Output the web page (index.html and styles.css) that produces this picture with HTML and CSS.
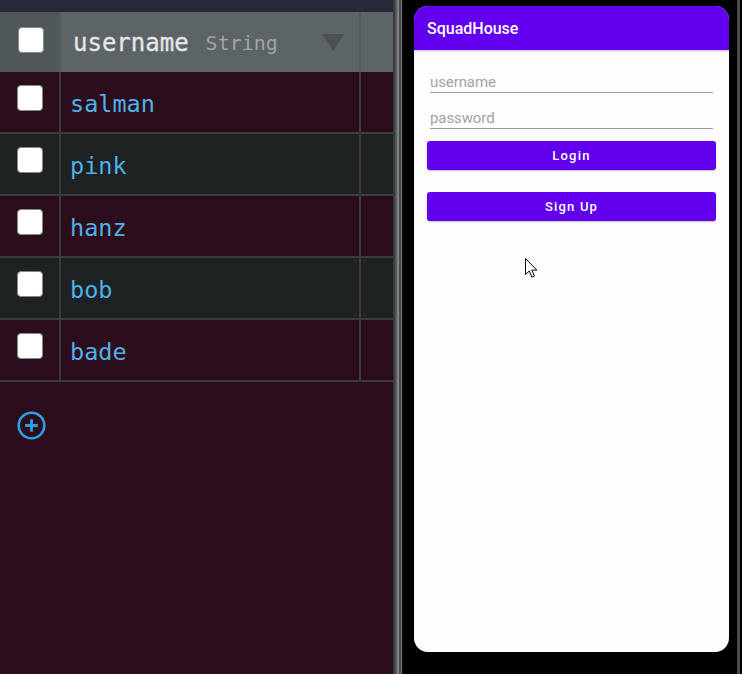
FILE: index.html
```html
<!DOCTYPE html>
<html lang="en">
<head>
<meta charset="utf-8">
<title>SquadHouse</title>
<link rel="stylesheet" href="styles.css">
</head>
<body>
<div class="screen">
  <section class="grid-panel">
    <div class="topbar"></div>
    <div class="row head">
      <div class="cell check"><span class="box"></span></div>
      <div class="cell name">
        <span class="col-title">username</span>
        <span class="col-type">String</span>
        <span class="tri"></span>
      </div>
      <div class="cell extra"></div>
    </div>
    <div class="row maroon">
      <div class="cell check"><span class="box"></span></div>
      <div class="cell name"><span class="val">salman</span></div>
      <div class="cell extra"></div>
    </div>
    <div class="row dark">
      <div class="cell check"><span class="box"></span></div>
      <div class="cell name"><span class="val">pink</span></div>
      <div class="cell extra"></div>
    </div>
    <div class="row maroon">
      <div class="cell check"><span class="box"></span></div>
      <div class="cell name"><span class="val">hanz</span></div>
      <div class="cell extra"></div>
    </div>
    <div class="row dark">
      <div class="cell check"><span class="box"></span></div>
      <div class="cell name"><span class="val">bob</span></div>
      <div class="cell extra"></div>
    </div>
    <div class="row maroon">
      <div class="cell check"><span class="box"></span></div>
      <div class="cell name"><span class="val">bade</span></div>
      <div class="cell extra"></div>
    </div>
    <div class="add">
      <svg width="29" height="29" viewBox="0 0 29 29" aria-label="add row">
        <circle cx="14.5" cy="14.5" r="12.8" fill="none" stroke="#2aa0e6" stroke-width="2.6"/>
        <path d="M14.5 8.2v12.6M8.2 14.5h12.6" stroke="#2aa0e6" stroke-width="2.8" stroke-linecap="butt"/>
      </svg>
    </div>
  </section>
  <div class="bezel"></div>
  <section class="device">
    <div class="phone">
      <header class="appbar">SquadHouse</header>
      <div class="form">
        <div class="field">username</div>
        <div class="field">password</div>
        <div class="btn first">Login</div>
        <div class="btn">Sign Up</div>
      </div>
      <svg class="cursor" width="14" height="21" viewBox="0 0 14 21">
        <path d="M0.5 0.5 L0.5 16.5 L4.3 13 L6.9 19.2 L9.4 18.1 L6.9 12.1 L11.9 12.1 Z" fill="#fff" stroke="#000" stroke-width="1" stroke-linejoin="miter"/>
      </svg>
    </div>
    <div class="rim"></div>
  </section>
</div>
</body>
</html>
```

FILE: styles.css
```css
* { box-sizing: border-box; }
html, body { margin: 0; padding: 0; }
body {
  width: 742px;
  height: 674px;
  overflow: hidden;
  background: #000;
  font-family: "DejaVu Sans Mono", monospace;
}
.screen {
  display: flex;
  width: 742px;
  height: 674px;
}

/* ---------- left data grid ---------- */
.grid-panel {
  width: 393px;
  flex: none;
  background: #2c0d1b;
  display: flex;
  flex-direction: column;
}
.topbar {
  height: 12px;
  background: #282938;
}
.row {
  display: grid;
  grid-template-columns: 59px 298px 1fr;
  column-gap: 2px;
  height: 62px;
  padding-bottom: 2px;
  background: #3b3b3d;
}
.row.head {
  height: 60px;
  padding-bottom: 0;
  background: #555b5f;
}
.cell { height: 60px; }
.maroon .cell { background: #2c0d1b; }
.dark .cell { background: #1e2223; }
.head .cell { background: #5d6467; }
.head .cell.check { background: #50575a; }

.check { padding: 13px 0 0 17px; }
.head .check { padding: 15px 0 0 18px; }
.box {
  display: block;
  width: 26px;
  height: 26px;
  background: #fff;
  border: 1px solid #8a8a8a;
  border-radius: 4px;
}
.name {
  display: flex;
  align-items: center;
  padding-left: 9px;
}
.val {
  font-size: 23.5px;
  line-height: 60px;
  color: #4fb1ea;
  padding-top: 3px;
}
.head .name { padding-left: 12px; }
.col-title {
  font-size: 24px;
  color: #e6e6e6;
  padding-top: 1px;
  -webkit-text-stroke: 0.3px #e6e6e6;
}
.col-type {
  font-size: 20px;
  color: #a3a3a3;
  margin-left: 17px;
  padding-top: 2px;
}
.tri {
  margin-left: auto;
  margin-right: 15px;
  width: 0;
  height: 0;
  border-left: 11px solid transparent;
  border-right: 11px solid transparent;
  border-top: 17px solid #4a5054;
}
.add {
  padding: 29px 0 0 17px;
  line-height: 0;
}

/* ---------- bezel ---------- */
.bezel {
  width: 11px;
  flex: none;
  background: linear-gradient(to right,
    #3a3a3c 0, #3a3a3c 2px,
    #56575a 2px, #56575a 4px,
    #808184 4px, #808184 6px,
    #4a4b4e 6px, #4a4b4e 8px,
    #6c6d70 8px, #6c6d70 9px,
    #151515 9px, #000 11px);
}

/* ---------- device ---------- */
.device {
  flex: 1;
  display: flex;
  background: #000;
  padding: 6px 0 0 10px;
}
.phone {
  position: relative;
  width: 315px;
  height: 646px;
  background: #fdfdfd;
  border-radius: 14px;
  overflow: hidden;
  font-family: Roboto, "Noto Sans", sans-serif;
}
.rim {
  width: 3px;
  height: 674px;
  margin-left: 8px;
  margin-top: -6px;
  background: #4b4b4e;
}
.appbar {
  height: 44px;
  background: #6200ee;
  color: #fff;
  font-size: 16px;
  font-weight: 500;
  line-height: 46px;
  padding-left: 13px;
  box-shadow: 0 1px 2px rgba(90, 60, 160, 0.35);
}
.form {
  padding: 22px 13px 0;
}
.field {
  margin: 0 3px 15px;
  font-size: 15px;
  line-height: 20px;
  color: #a3a3a3;
  border-bottom: 1.5px solid #9d9d9d;
  letter-spacing: -0.1px;
}
.btn {
  height: 29px;
  background: #6200ee;
  border-radius: 3px;
  color: #fff;
  font-size: 13px;
  font-weight: 500;
  letter-spacing: 1.2px;
  line-height: 30px;
  text-align: center;
  margin-top: 22px;
  box-shadow: 0 1px 1.5px rgba(0, 0, 0, 0.25);
}
.btn.first { margin-top: -3px; }
.cursor {
  position: absolute;
  left: 111px;
  top: 252px;
}
```
